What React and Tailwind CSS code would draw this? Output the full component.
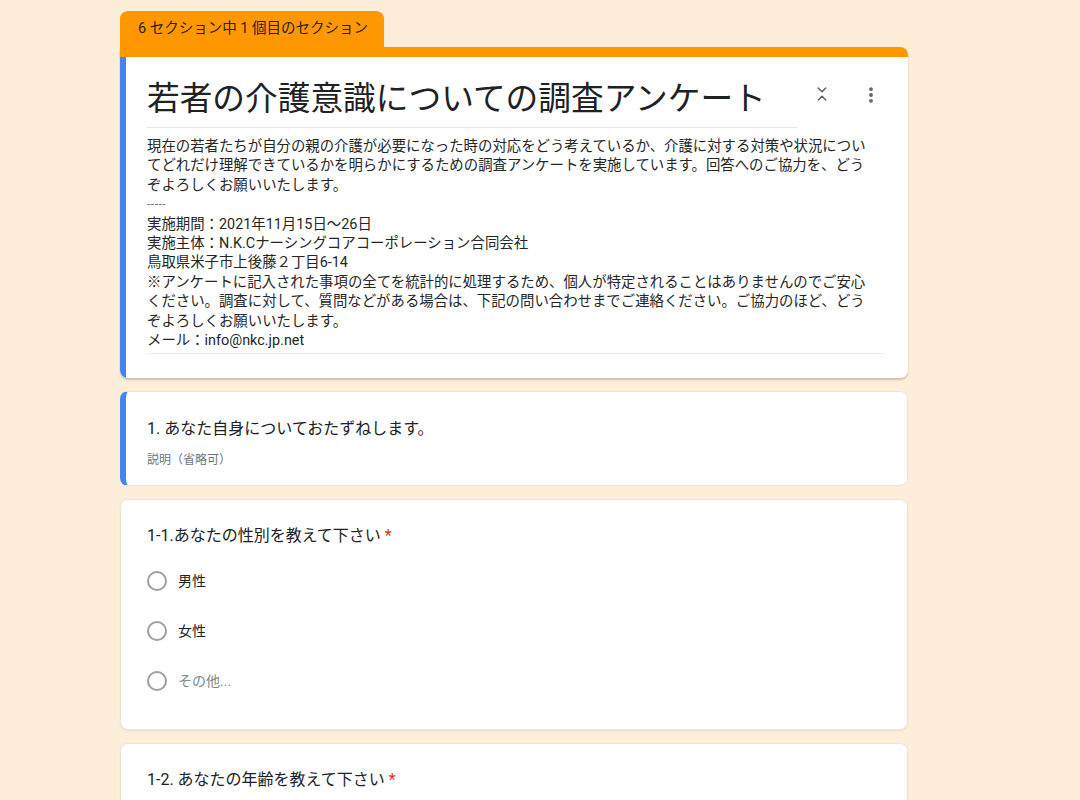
import React from 'react';
import { ChevronsDownUp, EllipsisVertical } from 'lucide-react';

const FONT = { fontFamily: 'Roboto, "Noto Sans CJK JP", sans-serif' };

const descriptionLines = [
  '現在の若者たちが自分の親の介護が必要になった時の対応をどう考えているか、介護に対する対策や状況につい',
  'てどれだけ理解できているかを明らかにするための調査アンケートを実施しています。回答へのご協力を、どう',
  'ぞよろしくお願いいたします。',
  '-----',
  '実施期間：2021年11月15日～26日',
  '実施主体：N.K.Cナーシングコアコーポレーション合同会社',
  '鳥取県米子市上後藤２丁目6-14',
  '※アンケートに記入された事項の全てを統計的に処理するため、個人が特定されることはありませんのでご安心',
  'ください。調査に対して、質問などがある場合は、下記の問い合わせまでご連絡ください。ご協力のほど、どう',
  'ぞよろしくお願いいたします。',
  'メール：info@nkc.jp.net',
];

const Radio = ({ label, muted }) => (
  <div className="flex items-center h-[20px] gap-[11px]">
    <span className="w-[20px] h-[20px] rounded-full border-2 border-[#9e9e9e] bg-white" />
    <span className={`text-[14px] ${muted ? 'text-[#80868b]' : 'text-[#202124]'}`}>{label}</span>
  </div>
);

const Question = ({ title, children }) => (
  <div className="bg-white rounded-lg border border-[#eee4d6] shadow-[0_1px_2px_rgba(0,0,0,0.06)] pl-[26px] pr-6 pt-[26px] pb-[38px]">
    <div className="text-[16px] leading-[20px] text-[#202124]">
      {title} <span className="text-[#d93025]">*</span>
    </div>
    {children}
  </div>
);

export default function App() {
  return (
    <div className="min-h-[800px] bg-[#fdeeda] pt-[11px] pl-[120px]" style={FONT}>
      <div className="w-[788px] flex flex-col">
        {/* section tab */}
        <div className="w-[264px] h-[36px] bg-[#ff9800] rounded-t-lg flex items-center pl-[18px] text-[14.5px] text-[#2b2116]">
          6 セクション中 1 個目のセクション
        </div>

        {/* header card */}
        <div className="rounded-b-lg rounded-tr-lg overflow-hidden shadow-[0_2px_2px_rgba(0,0,0,0.18),0_0_1px_rgba(0,0,0,0.12)]">
          <div className="h-[10px] bg-[#ff9800]" />
          <div className="bg-white border-l-[6px] border-l-[#4285f4] pl-[21px] pr-6 pt-[21px] pb-[24px]">
            <div className="flex items-start">
              <div className="w-[650px] border-b border-[#e4e4e4] pb-[7px] text-[32.7px] leading-[42px] text-[#202124] whitespace-nowrap">
                若者の介護意識についての調査アンケート
              </div>
              <div className="flex-1 flex justify-between pl-[16px] pt-[7px] text-[#5f6368]">
                <ChevronsDownUp size={18} strokeWidth={2} />
                <EllipsisVertical size={20} strokeWidth={2.6} className="mr-[3px]" />
              </div>
            </div>
            <div className="mt-[9px] pb-[3px] border-b border-[#ececec] text-[14.4px] leading-[19.4px] text-[#262626] whitespace-nowrap">
              {descriptionLines.map((line, i) => (
                <div key={i} className={line === '-----' ? 'text-[12px] tracking-[0.5px] text-[#777]' : ''}>
                  {line}
                </div>
              ))}
            </div>
          </div>
        </div>

        {/* section title card */}
        <div className="mt-[13px] bg-white rounded-lg border-l-[6px] border-l-[#4285f4] border-y border-r border-[#eee4d6] pl-[21px] pr-6 pt-[27px] pb-[18px]">
          <div className="text-[16px] leading-[20px] text-[#202124]">1. あなた自身についておたずねします。</div>
          <div className="mt-[14px] text-[12px] leading-[14px] text-[#70757a]">説明（省略可）</div>
        </div>

        {/* question 1-1 */}
        <div className="mt-[13px]">
          <Question title="1-1.あなたの性別を教えて下さい">
            <div className="mt-[25px] flex flex-col gap-[30px]">
              <Radio label="男性" />
              <Radio label="女性" />
              <Radio label="その他..." muted />
            </div>
          </Question>
        </div>

        {/* question 1-2 */}
        <div className="mt-[13px]">
          <Question title="1-2. あなたの年齢を教えて下さい">
            <div className="h-[40px]" />
          </Question>
        </div>
      </div>
    </div>
  );
}
